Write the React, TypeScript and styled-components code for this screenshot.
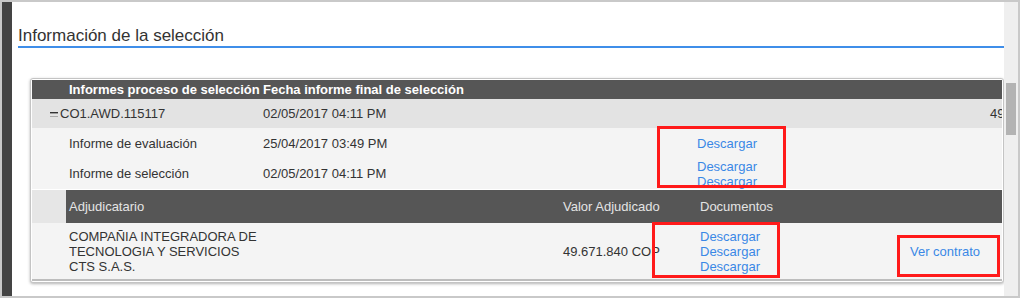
import React from "react";
import styled, { createGlobalStyle } from "styled-components";

const GlobalStyle = createGlobalStyle`
  body {
    margin: 0;
    background: #fff;
    font-family: "Liberation Sans", Arial, sans-serif;
    color: #333;
  }
`;

const reports = [
  { name: "Informe de evaluación", date: "25/04/2017 03:49 PM", files: 1 },
  { name: "Informe de selección", date: "02/05/2017 04:11 PM", files: 2 },
];

const App = () => {
  return (
    <Page>
      <GlobalStyle />
      <Frame>
        <SideBar />
        <Content>
          <SectionTitle>Información de la selección</SectionTitle>
          <TableCard>
            <ReportGrid>
              <HeadCell />
              <HeadCell>Informes proceso de selección</HeadCell>
              <HeadCell>Fecha informe final de selección</HeadCell>
              <HeadCell />
            </ReportGrid>

            <ProcessRow>
              <ProcessName>
                <Toggle width="8" height="8" viewBox="0 0 8 8">
                  <rect x="0" y="2" width="8" height="1.4" fill="#333" />
                  <rect x="0" y="6" width="8" height="1" fill="#aaa" />
                </Toggle>
                CO1.AWD.115117
              </ProcessName>
              <Cell>02/05/2017 04:11 PM</Cell>
              <ClippedValue>49.671.840 COP</ClippedValue>
            </ProcessRow>

            {reports.map((r) => (
              <ReportRow key={r.name} $height={r.files > 1 ? 31 : 30}>
                <Cell />
                <Cell>{r.name}</Cell>
                <Cell>{r.date}</Cell>
                <LinkStack>
                  {Array.from({ length: r.files }).map((_, i) => (
                    <DocLink key={i}>Descargar</DocLink>
                  ))}
                </LinkStack>
              </ReportRow>
            ))}

            <AwardHead>
              <Spacer />
              <SubHeadCell>Adjudicatario</SubHeadCell>
              <SubHeadCell>Valor Adjudicado</SubHeadCell>
              <SubHeadCell>Documentos</SubHeadCell>
              <SubHeadCell />
            </AwardHead>

            <AwardRow>
              <Cell />
              <Cell>
                <Company>COMPAÑIA INTEGRADORA DE TECNOLOGIA Y SERVICIOS CTS S.A.S.</Company>
              </Cell>
              <Cell>49.671.840 COP</Cell>
              <LinkStack>
                <DocLink>Descargar</DocLink>
                <DocLink>Descargar</DocLink>
                <DocLink>Descargar</DocLink>
              </LinkStack>
              <Cell>
                <DocLink>Ver contrato</DocLink>
              </Cell>
            </AwardRow>
          </TableCard>
        </Content>
        <ScrollTrack>
          <ScrollThumb />
        </ScrollTrack>
      </Frame>

      <Mark style={{ left: 657, top: 126, width: 129, height: 62 }} />
      <Mark style={{ left: 652, top: 222, width: 128, height: 56 }} />
      <Mark style={{ left: 897, top: 235, width: 103, height: 42 }} />
    </Page>
  );
};

export default App;

const Page = styled.div`
  position: relative;
  width: 1024px;
  height: 303px;
  overflow: hidden;
`;

const Frame = styled.div`
  display: flex;
  width: 1020px;
  height: 298px;
  box-sizing: border-box;
  border: 2px solid #c9c9c9;
  background: #fff;
`;

const SideBar = styled.div`
  width: 10px;
  flex: none;
  background: #444;
`;

const Content = styled.div`
  flex: 1;
  min-width: 0;
`;

const SectionTitle = styled.h2`
  margin: 24px 0 0 6px;
  padding-bottom: 0;
  font-size: 17px;
  font-weight: normal;
  line-height: 20px;
  color: #333;
  border-bottom: 2px solid #3f8ee9;
`;

const TableCard = styled.div`
  margin: 30px 0 0 18px;
  padding: 1px;
  border: 1px solid #c4c4c4;
  border-radius: 3px;
  box-shadow: 0 1px 3px rgba(0, 0, 0, 0.3);
  background: #fff;
  font-size: 13px;
  line-height: 15px;
`;

const ReportGrid = styled.div`
  display: grid;
  grid-template-columns: 37px 194px 434px 1fr;
  height: 19px;
  align-items: center;
  background: #565656;
`;

const HeadCell = styled.div`
  color: #fff;
  font-weight: bold;
  white-space: nowrap;
`;

const ProcessRow = styled.div`
  display: grid;
  grid-template-columns: 231px 434px 1fr;
  height: 29px;
  align-items: center;
  background: #e3e3e3;
`;

const ProcessName = styled.div`
  display: flex;
  align-items: center;
  gap: 2px;
  padding-left: 18px;
`;

const Toggle = styled.svg`
  flex: none;
`;

const ClippedValue = styled.div`
  padding-left: 293px;
  white-space: nowrap;
  overflow: hidden;
`;

const ReportRow = styled.div<{ $height: number }>`
  display: grid;
  grid-template-columns: 37px 194px 434px 1fr;
  height: ${(p) => p.$height}px;
  align-items: center;
  background: #f4f4f4;
`;

const Cell = styled.div`
  white-space: nowrap;
`;

const LinkStack = styled.div`
  display: flex;
  flex-direction: column;
`;

const DocLink = styled.span`
  color: #3a88e6;
  cursor: pointer;
`;

const AwardHead = styled.div`
  display: grid;
  grid-template-columns: 34px 494px 137px 210px 1fr;
  height: 33px;
  margin-top: 1px;
  align-items: stretch;
`;

const Spacer = styled.div`
  background: #e6e6e6;
`;

const SubHeadCell = styled.div`
  display: flex;
  align-items: center;
  padding-left: 3px;
  background: #565656;
  color: #e4e4e4;
`;

const AwardRow = styled.div`
  display: grid;
  grid-template-columns: 34px 494px 137px 210px 1fr;
  height: 56px;
  align-items: center;
  background: #f4f4f4;
  border-bottom: 2px solid #bdbdbd;

  & > div {
    padding-left: 3px;
  }
`;

const Company = styled.div`
  max-width: 194px;
  white-space: normal;
`;

const ScrollTrack = styled.div`
  width: 14px;
  flex: none;
  background: #efefef;
  padding-top: 81px;
  box-sizing: border-box;
`;

const ScrollThumb = styled.div`
  width: 10px;
  height: 52px;
  margin-left: 2px;
  background: #b3b3b3;
`;

const Mark = styled.div`
  position: absolute;
  box-sizing: border-box;
  border: 3px solid #ff1a1a;
`;
